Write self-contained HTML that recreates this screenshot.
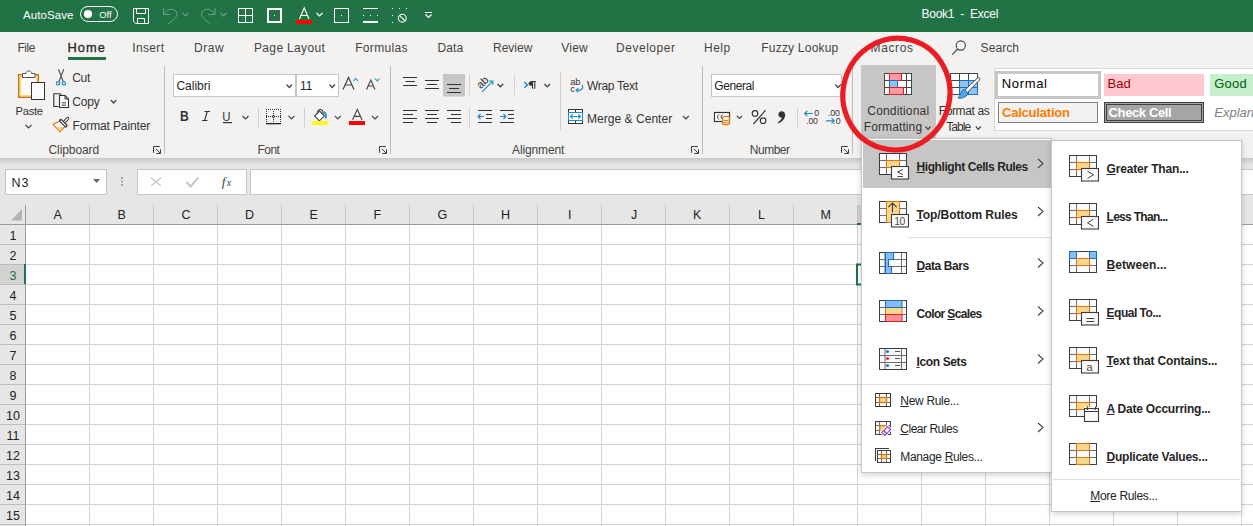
<!DOCTYPE html>
<html><head><meta charset="utf-8"><style>
html,body{margin:0;padding:0;}
body{width:1253px;height:526px;overflow:hidden;position:relative;background:#fff;font-family:"Liberation Sans",sans-serif;}
.a{position:absolute;}
.t{position:absolute;white-space:pre;line-height:20px;height:20px;font-family:"Liberation Sans",sans-serif;}
.t u{text-decoration:underline;text-underline-offset:1px;text-decoration-thickness:1px;}
svg{position:absolute;left:0;top:0;}
</style></head><body>
<!-- backgrounds -->
<div class="a" style="left:0;top:0;width:1253px;height:32px;background:#217346"></div>
<div class="a" style="left:0;top:32px;width:1253px;height:126px;background:#f3f2f1"></div>
<div class="a" style="left:0;top:158px;width:1253px;height:67px;background:#e6e6e6"></div>
<div class="a" style="left:0;top:158px;width:1253px;height:7px;background:linear-gradient(#c9c9c9,#e6e6e6)"></div>
<!-- formula bar boxes -->
<div class="a" style="left:5px;top:169px;width:100px;height:24px;background:#fff;border:1px solid #c6c6c6"></div>
<div class="a" style="left:137px;top:169px;width:108px;height:24px;background:#fff;border:1px solid #c6c6c6"></div>
<div class="a" style="left:250px;top:169px;width:1010px;height:24px;background:#fff;border:1px solid #c6c6c6"></div>
<!-- row header -->
<div class="a" style="left:0;top:225px;width:25px;height:301px;background:#e6e6e6"></div>
<div class="a" style="left:0;top:265px;width:25px;height:19px;background:#d2d2d2"></div>
<div class="a" style="left:857px;top:205px;width:64px;height:19px;background:#d2d2d2"></div>
<!-- ribbon styles gallery -->
<div class="a" style="left:994px;top:68px;width:300px;height:61px;background:#fff;border:1px solid #d6d6d6"></div>
<div class="a" style="left:995px;top:71px;width:100px;height:22px;background:#fff;border:3px solid #c6c6c6"></div>
<div class="a" style="left:1104px;top:74px;width:100px;height:22px;background:#ffc7ce"></div>
<div class="a" style="left:1210px;top:74px;width:100px;height:22px;background:#c6efce"></div>
<div class="a" style="left:998px;top:102px;width:98px;height:19px;background:#f2f2f2;border:1px solid #7f7f7f"></div>
<div class="a" style="left:1104px;top:102px;width:94px;height:15px;background:#a5a5a5;border:3px double #3f3f3f"></div>
<!-- CF button highlight -->
<div class="a" style="left:861px;top:65px;width:75px;height:73px;background:#c8c6c4"></div>
<svg width="1253" height="526" viewBox="0 0 1253 526">
<line x1="25.5" y1="205" x2="25.5" y2="224" stroke="#c6c6c6"/>
<line x1="89.5" y1="205" x2="89.5" y2="224" stroke="#c6c6c6"/>
<line x1="153.5" y1="205" x2="153.5" y2="224" stroke="#c6c6c6"/>
<line x1="217.5" y1="205" x2="217.5" y2="224" stroke="#c6c6c6"/>
<line x1="281.5" y1="205" x2="281.5" y2="224" stroke="#c6c6c6"/>
<line x1="345.5" y1="205" x2="345.5" y2="224" stroke="#c6c6c6"/>
<line x1="409.5" y1="205" x2="409.5" y2="224" stroke="#c6c6c6"/>
<line x1="473.5" y1="205" x2="473.5" y2="224" stroke="#c6c6c6"/>
<line x1="537.5" y1="205" x2="537.5" y2="224" stroke="#c6c6c6"/>
<line x1="601.5" y1="205" x2="601.5" y2="224" stroke="#c6c6c6"/>
<line x1="665.5" y1="205" x2="665.5" y2="224" stroke="#c6c6c6"/>
<line x1="729.5" y1="205" x2="729.5" y2="224" stroke="#c6c6c6"/>
<line x1="793.5" y1="205" x2="793.5" y2="224" stroke="#c6c6c6"/>
<line x1="857.5" y1="205" x2="857.5" y2="224" stroke="#c6c6c6"/>
<line x1="921.5" y1="205" x2="921.5" y2="224" stroke="#c6c6c6"/>
<line x1="985.5" y1="205" x2="985.5" y2="224" stroke="#c6c6c6"/>
<line x1="1049.5" y1="205" x2="1049.5" y2="224" stroke="#c6c6c6"/>
<line x1="1113.5" y1="205" x2="1113.5" y2="224" stroke="#c6c6c6"/>
<line x1="1177.5" y1="205" x2="1177.5" y2="224" stroke="#c6c6c6"/>
<line x1="1241.5" y1="205" x2="1241.5" y2="224" stroke="#c6c6c6"/>
<line x1="89.5" y1="225" x2="89.5" y2="526" stroke="#d4d4d4"/>
<line x1="153.5" y1="225" x2="153.5" y2="526" stroke="#d4d4d4"/>
<line x1="217.5" y1="225" x2="217.5" y2="526" stroke="#d4d4d4"/>
<line x1="281.5" y1="225" x2="281.5" y2="526" stroke="#d4d4d4"/>
<line x1="345.5" y1="225" x2="345.5" y2="526" stroke="#d4d4d4"/>
<line x1="409.5" y1="225" x2="409.5" y2="526" stroke="#d4d4d4"/>
<line x1="473.5" y1="225" x2="473.5" y2="526" stroke="#d4d4d4"/>
<line x1="537.5" y1="225" x2="537.5" y2="526" stroke="#d4d4d4"/>
<line x1="601.5" y1="225" x2="601.5" y2="526" stroke="#d4d4d4"/>
<line x1="665.5" y1="225" x2="665.5" y2="526" stroke="#d4d4d4"/>
<line x1="729.5" y1="225" x2="729.5" y2="526" stroke="#d4d4d4"/>
<line x1="793.5" y1="225" x2="793.5" y2="526" stroke="#d4d4d4"/>
<line x1="857.5" y1="225" x2="857.5" y2="526" stroke="#d4d4d4"/>
<line x1="921.5" y1="225" x2="921.5" y2="526" stroke="#d4d4d4"/>
<line x1="985.5" y1="225" x2="985.5" y2="526" stroke="#d4d4d4"/>
<line x1="1049.5" y1="225" x2="1049.5" y2="526" stroke="#d4d4d4"/>
<line x1="1113.5" y1="225" x2="1113.5" y2="526" stroke="#d4d4d4"/>
<line x1="1177.5" y1="225" x2="1177.5" y2="526" stroke="#d4d4d4"/>
<line x1="1241.5" y1="225" x2="1241.5" y2="526" stroke="#d4d4d4"/>
<line x1="26" y1="244.5" x2="1253" y2="244.5" stroke="#d4d4d4"/>
<line x1="0" y1="244.5" x2="25" y2="244.5" stroke="#bdbdbd"/>
<line x1="26" y1="264.5" x2="1253" y2="264.5" stroke="#d4d4d4"/>
<line x1="0" y1="264.5" x2="25" y2="264.5" stroke="#bdbdbd"/>
<line x1="26" y1="284.5" x2="1253" y2="284.5" stroke="#d4d4d4"/>
<line x1="0" y1="284.5" x2="25" y2="284.5" stroke="#bdbdbd"/>
<line x1="26" y1="304.5" x2="1253" y2="304.5" stroke="#d4d4d4"/>
<line x1="0" y1="304.5" x2="25" y2="304.5" stroke="#bdbdbd"/>
<line x1="26" y1="324.5" x2="1253" y2="324.5" stroke="#d4d4d4"/>
<line x1="0" y1="324.5" x2="25" y2="324.5" stroke="#bdbdbd"/>
<line x1="26" y1="344.5" x2="1253" y2="344.5" stroke="#d4d4d4"/>
<line x1="0" y1="344.5" x2="25" y2="344.5" stroke="#bdbdbd"/>
<line x1="26" y1="364.5" x2="1253" y2="364.5" stroke="#d4d4d4"/>
<line x1="0" y1="364.5" x2="25" y2="364.5" stroke="#bdbdbd"/>
<line x1="26" y1="384.5" x2="1253" y2="384.5" stroke="#d4d4d4"/>
<line x1="0" y1="384.5" x2="25" y2="384.5" stroke="#bdbdbd"/>
<line x1="26" y1="404.5" x2="1253" y2="404.5" stroke="#d4d4d4"/>
<line x1="0" y1="404.5" x2="25" y2="404.5" stroke="#bdbdbd"/>
<line x1="26" y1="424.5" x2="1253" y2="424.5" stroke="#d4d4d4"/>
<line x1="0" y1="424.5" x2="25" y2="424.5" stroke="#bdbdbd"/>
<line x1="26" y1="444.5" x2="1253" y2="444.5" stroke="#d4d4d4"/>
<line x1="0" y1="444.5" x2="25" y2="444.5" stroke="#bdbdbd"/>
<line x1="26" y1="464.5" x2="1253" y2="464.5" stroke="#d4d4d4"/>
<line x1="0" y1="464.5" x2="25" y2="464.5" stroke="#bdbdbd"/>
<line x1="26" y1="484.5" x2="1253" y2="484.5" stroke="#d4d4d4"/>
<line x1="0" y1="484.5" x2="25" y2="484.5" stroke="#bdbdbd"/>
<line x1="26" y1="504.5" x2="1253" y2="504.5" stroke="#d4d4d4"/>
<line x1="0" y1="504.5" x2="25" y2="504.5" stroke="#bdbdbd"/>
<line x1="26" y1="524.5" x2="1253" y2="524.5" stroke="#d4d4d4"/>
<line x1="0" y1="524.5" x2="25" y2="524.5" stroke="#bdbdbd"/>
<!-- header borders -->
<line x1="0" y1="224.5" x2="1253" y2="224.5" stroke="#9b9b9b"/>
<line x1="25.5" y1="205" x2="25.5" y2="526" stroke="#9b9b9b"/>
<polygon points="11,220.5 22,220.5 22,209" fill="#b4b4b4"/>
<line x1="857" y1="224" x2="921" y2="224" stroke="#217346" stroke-width="2"/>
<line x1="25" y1="264" x2="25" y2="284" stroke="#217346" stroke-width="2"/>
<rect x="857" y="264.5" width="64" height="20" fill="none" stroke="#217346" stroke-width="2"/>
<path d="M133.5,8.5 H148.5 V23.5 H135.5 L133.5,21.5 Z" fill="none" stroke="#ffffff"/>
<path d="M136.5,8.5 V13.5 H145.5 V8.5" fill="none" stroke="#ffffff"/>
<path d="M137.5,23.5 V18.5 H144.5 V23.5" fill="none" stroke="#ffffff"/>
<path d="M163.5,8 V14.5 H170" fill="none" stroke="#6a9f80"/>
<path d="M164,14 C167,7.5 177,8 177,14 C177,17 174,19.5 168,24" fill="none" stroke="#6a9f80"/>
<polyline points="182.5,13 185.5,16 188.5,13" fill="none" stroke="#6a9f80" stroke-width="1.2"/>
<path d="M215,8 V14.5 H208" fill="none" stroke="#6a9f80"/>
<path d="M214.5,14 C211.5,7.5 201.5,8 201.5,14 C201.5,17 204.5,19.5 210.5,24" fill="none" stroke="#6a9f80"/>
<polyline points="220.5,13 223.5,16 226.5,13" fill="none" stroke="#6a9f80" stroke-width="1.2"/>
<rect x="238.5" y="8.5" width="14" height="14" fill="none" stroke="#ffffff"/>
<line x1="245.5" y1="8.5" x2="245.5" y2="22.5" stroke="#ffffff"/><line x1="238.5" y1="15.5" x2="252.5" y2="15.5" stroke="#ffffff"/>
<rect x="268" y="9" width="13" height="13" fill="none" stroke="#ffffff" stroke-width="2"/><rect x="274" y="15" width="1" height="1" fill="#ffffff"/>
<path d="M299.5,19 L304.2,8 L309,19 M301.2,15.5 H307.2" fill="none" stroke="#ffffff" stroke-width="1.1"/>
<rect x="296" y="20" width="16" height="4" fill="#ff0000"/>
<polyline points="316.5,13 319.5,16 322.5,13" fill="none" stroke="#ffffff" stroke-width="1.2"/>
<rect x="334.5" y="8.5" width="14" height="14" fill="none" stroke="#ffffff"/><rect x="341" y="15" width="1" height="1" fill="#ffffff"/>
<line x1="363" y1="8.5" x2="378" y2="8.5" stroke="#ffffff"/><rect x="363" y="21" width="15" height="2" fill="#ffffff"/>
<rect x="363" y="15" width="1" height="1" fill="#ffffff"/>
<rect x="370" y="15" width="1" height="1" fill="#ffffff"/>
<rect x="377" y="15" width="1" height="1" fill="#ffffff"/>
<rect x="392" y="8" width="1" height="1" fill="#ffffff"/>
<rect x="399" y="8" width="1" height="1" fill="#ffffff"/>
<rect x="406" y="8" width="1" height="1" fill="#ffffff"/>
<rect x="392" y="15" width="1" height="1" fill="#ffffff"/>
<rect x="392" y="22" width="1" height="1" fill="#ffffff"/>
<circle cx="402.3" cy="18.2" r="3.9" fill="none" stroke="#ffffff" stroke-width="1.1"/><line x1="399.5" y1="15.4" x2="405.1" y2="21" stroke="#ffffff" stroke-width="1.1"/>
<line x1="425" y1="12.5" x2="432" y2="12.5" stroke="#ffffff"/><polyline points="425.5,14.5 428.5,17.5 431.5,14.5" fill="none" stroke="#ffffff" stroke-width="1.2"/>
<rect x="80.5" y="6.5" width="37" height="15" rx="7.5" fill="none" stroke="#ffffff"/><circle cx="88" cy="14.1" r="4.1" fill="#ffffff"/>
<rect x="68" y="57" width="38" height="3" fill="#217346"/>
<circle cx="960.8" cy="45.5" r="4.6" fill="none" stroke="#444444" stroke-width="1.1"/><line x1="957.6" y1="49" x2="952.2" y2="54.6" stroke="#444444" stroke-width="1.1"/>
<line x1="164.5" y1="66" x2="164.5" y2="154" stroke="#bdbbb9"/>
<line x1="390.5" y1="66" x2="390.5" y2="154" stroke="#bdbbb9"/>
<line x1="702.5" y1="66" x2="702.5" y2="154" stroke="#bdbbb9"/>
<line x1="852.5" y1="66" x2="852.5" y2="154" stroke="#bdbbb9"/>
<path d="M153.5,152.8 V146.5 H159.8" fill="none" stroke="#3a3a3a"/><path d="M155.8,148.8 L160,153" fill="none" stroke="#3a3a3a"/><path d="M156.3,153.5 H160.5 V149.3" fill="none" stroke="#3a3a3a"/>
<path d="M379.5,152.8 V146.5 H385.8" fill="none" stroke="#3a3a3a"/><path d="M381.8,148.8 L386,153" fill="none" stroke="#3a3a3a"/><path d="M382.3,153.5 H386.5 V149.3" fill="none" stroke="#3a3a3a"/>
<path d="M691.5,152.8 V146.5 H697.8" fill="none" stroke="#3a3a3a"/><path d="M693.8,148.8 L698,153" fill="none" stroke="#3a3a3a"/><path d="M694.3,153.5 H698.5 V149.3" fill="none" stroke="#3a3a3a"/>
<path d="M841.5,152.8 V146.5 H847.8" fill="none" stroke="#3a3a3a"/><path d="M843.8,148.8 L848,153" fill="none" stroke="#3a3a3a"/><path d="M844.3,153.5 H848.5 V149.3" fill="none" stroke="#3a3a3a"/>
<rect x="18.75" y="74.75" width="19.5" height="22.5" fill="#fffdf8" stroke="#d47500" stroke-width="1.5"/>
<rect x="20.5" y="76.5" width="16" height="19" fill="none" stroke="#f8d48c" stroke-width="1"/>
<path d="M22.5,77.5 V73.5 H26 C26.5,70 31,70 31.5,73.5 H35 V77.5 Z" fill="#ffffff" stroke="#555"/>
<rect x="31.5" y="82.5" width="13" height="17" fill="#fbfbfb" stroke="#333"/>
<polyline points="25.5,125 28.5,128 31.5,125" fill="none" stroke="#444444" stroke-width="1.2"/>
<path d="M58.4,69.3 L63.2,81.5 M63.8,69.3 L59,81.5" fill="none" stroke="#505050" stroke-width="1.1"/>
<circle cx="58.1" cy="83.2" r="1.65" fill="#fff" stroke="#1e8bcd" stroke-width="1.3"/><circle cx="63.9" cy="83.2" r="1.65" fill="#fff" stroke="#1e8bcd" stroke-width="1.3"/>
<path d="M58.5,106.5 H53.8 V93.8 H60 L61.5,95.3" fill="none" stroke="#333" stroke-width="1.1"/>
<path d="M59.5,107.5 V95.5 H65 L68.5,99 V107.5 Z" fill="#fff" stroke="#333" stroke-width="1.1"/><path d="M65,95.5 V99 H68.5" fill="none" stroke="#333"/>
<line x1="61.7" y1="102.8" x2="66" y2="102.8" stroke="#333"/><line x1="61.7" y1="105.2" x2="66" y2="105.2" stroke="#333"/>
<polyline points="110.8,100 113.55,103 116.3,100" fill="none" stroke="#444444" stroke-width="1.2"/>
<path d="M53.2,124.3 L60.8,120.8 L65.5,126 L59.8,131.6 Z" fill="#fff" stroke="#e8730c" stroke-width="1.2"/>
<path d="M56.5,127.3 L63.5,127 L59.8,131 Z" fill="#fbd38a"/>
<path d="M63.5,123.2 L67.6,118.5" stroke="#3a3a3a" stroke-width="3.4" stroke-linecap="round"/><path d="M63.5,123.2 L67.6,118.5" stroke="#fff" stroke-width="1.2" stroke-linecap="round"/>
<path d="M60.8,120.6 L65.8,125.8" stroke="#3a3a3a" stroke-width="3.4" stroke-linecap="round"/><path d="M60.8,120.6 L65.8,125.8" stroke="#fff" stroke-width="1.2"/>
<rect x="173.5" y="74.5" width="122" height="22" fill="#fff" stroke="#c6c6c6"/>
<rect x="296.5" y="74.5" width="42" height="22" fill="#fff" stroke="#c6c6c6"/>
<polyline points="286.5,84.5 289.25,87.5 292.0,84.5" fill="none" stroke="#444444" stroke-width="1.2"/><polyline points="329.5,84.5 332.25,87.5 335.0,84.5" fill="none" stroke="#444444" stroke-width="1.2"/>
<path d="M343,89.5 L348.5,77.5 L354,89.5 M345,85 H352" fill="none" stroke="#444" stroke-width="1.2"/>
<polyline points="353.5,81 355.8,78.5 358,81" fill="none" stroke="#1e8bcd" stroke-width="1.1"/>
<path d="M366.5,89.5 L370.8,80 L375,89.5 M368,86 H373.5" fill="none" stroke="#444" stroke-width="1.1"/>
<polyline points="375,78.5 377.3,81 379.5,78.5" fill="none" stroke="#1e8bcd" stroke-width="1.1"/>
<text x="180" y="120.9" font-family="Liberation Sans" font-weight="bold" font-size="13.8" fill="#333" transform="translate(180 0) scale(0.88 1) translate(-180 0)">B</text>
<path d="M204.5,111.5 H210 M202,120.5 H207.5 M207.2,111.5 L204.7,120.5" fill="none" stroke="#333" stroke-width="1.1"/>
<text x="222.3" y="120.6" font-family="Liberation Sans" font-size="13.3" fill="#333" transform="translate(222.3 0) scale(0.86 1) translate(-222.3 0)">U</text><rect x="223" y="122" width="9" height="1.2" fill="#333"/>
<polyline points="242.5,116 245.5,119 248.5,116" fill="none" stroke="#444444" stroke-width="1.2"/>
<line x1="258.5" y1="108" x2="258.5" y2="127.5" stroke="#d2d0ce"/><line x1="304.5" y1="108" x2="304.5" y2="127.5" stroke="#d2d0ce"/>
<rect x="266" y="109" width="1" height="1" fill="#333"/><rect x="266" y="116" width="1" height="1" fill="#333"/><rect x="268" y="109" width="1" height="1" fill="#333"/><rect x="268" y="116" width="1" height="1" fill="#333"/><rect x="270" y="109" width="1" height="1" fill="#333"/><rect x="270" y="116" width="1" height="1" fill="#333"/><rect x="272" y="109" width="1" height="1" fill="#333"/><rect x="272" y="116" width="1" height="1" fill="#333"/><rect x="274" y="109" width="1" height="1" fill="#333"/><rect x="274" y="116" width="1" height="1" fill="#333"/><rect x="276" y="109" width="1" height="1" fill="#333"/><rect x="276" y="116" width="1" height="1" fill="#333"/><rect x="278" y="109" width="1" height="1" fill="#333"/><rect x="278" y="116" width="1" height="1" fill="#333"/><rect x="280" y="109" width="1" height="1" fill="#333"/><rect x="280" y="116" width="1" height="1" fill="#333"/><rect x="266" y="111" width="1" height="1" fill="#333"/><rect x="273" y="111" width="1" height="1" fill="#333"/><rect x="280" y="111" width="1" height="1" fill="#333"/><rect x="266" y="113" width="1" height="1" fill="#333"/><rect x="273" y="113" width="1" height="1" fill="#333"/><rect x="280" y="113" width="1" height="1" fill="#333"/><rect x="266" y="115" width="1" height="1" fill="#333"/><rect x="273" y="115" width="1" height="1" fill="#333"/><rect x="280" y="115" width="1" height="1" fill="#333"/><rect x="266" y="117" width="1" height="1" fill="#333"/><rect x="273" y="117" width="1" height="1" fill="#333"/><rect x="280" y="117" width="1" height="1" fill="#333"/><rect x="266" y="119" width="1" height="1" fill="#333"/><rect x="273" y="119" width="1" height="1" fill="#333"/><rect x="280" y="119" width="1" height="1" fill="#333"/><rect x="266" y="121" width="1" height="1" fill="#333"/><rect x="273" y="121" width="1" height="1" fill="#333"/><rect x="280" y="121" width="1" height="1" fill="#333"/>
<circle cx="273.5" cy="116.5" r="1.2" fill="none" stroke="#333" stroke-width="0.8"/>
<rect x="266" y="123" width="15" height="1.3" fill="#222"/>
<polyline points="288.5,115.8 291.5,118.8 294.5,115.8" fill="none" stroke="#444444" stroke-width="1.2"/>
<path d="M314.6,116 L319.6,111 L324.4,115.8 L319.4,120.8 Z" fill="#fff" stroke="#444" stroke-width="1.15"/>
<path d="M317.2,113.4 C317.5,109.5 321.5,107.8 322.8,111.5 L323.2,114.5" fill="none" stroke="#444" stroke-width="1.1"/>
<path d="M323.6,111.8 C325.8,112.5 326.3,115.5 325.6,118.6" fill="none" stroke="#1e8bcd" stroke-width="1.6"/>
<rect x="312" y="121" width="16" height="4" fill="#ffff00"/>
<polyline points="334.8,115.8 337.8,118.8 340.8,115.8" fill="none" stroke="#444444" stroke-width="1.2"/>
<path d="M352.6,119.8 L357.3,109.3 L362,119.8 M354.1,116.3 H360.5" fill="none" stroke="#444" stroke-width="1.15"/>
<rect x="349" y="121" width="16" height="4" fill="#ff0000"/>
<polyline points="372,116 375.0,119 378,116" fill="none" stroke="#444444" stroke-width="1.2"/>
<rect x="443" y="74" width="22" height="22.5" fill="#c8c6c4"/>
<line x1="403" y1="77.5" x2="417" y2="77.5" stroke="#333"/><line x1="405.5" y1="81.5" x2="415" y2="81.5" stroke="#333"/><line x1="403" y1="85.5" x2="417" y2="85.5" stroke="#333"/>
<line x1="425" y1="80.5" x2="439" y2="80.5" stroke="#333"/><line x1="427" y1="84.5" x2="437" y2="84.5" stroke="#333"/><line x1="425" y1="88.5" x2="439" y2="88.5" stroke="#333"/>
<line x1="447" y1="84.5" x2="461" y2="84.5" stroke="#333"/><line x1="449" y1="88.5" x2="459" y2="88.5" stroke="#333"/><line x1="447" y1="92.5" x2="461" y2="92.5" stroke="#333"/>
<line x1="403" y1="110.5" x2="417" y2="110.5" stroke="#333"/><line x1="403" y1="114.5" x2="413" y2="114.5" stroke="#333"/><line x1="403" y1="118.5" x2="417" y2="118.5" stroke="#333"/><line x1="403" y1="122.5" x2="413" y2="122.5" stroke="#333"/>
<line x1="425" y1="110.5" x2="439" y2="110.5" stroke="#333"/><line x1="427" y1="114.5" x2="437" y2="114.5" stroke="#333"/><line x1="425" y1="118.5" x2="439" y2="118.5" stroke="#333"/><line x1="427" y1="122.5" x2="437" y2="122.5" stroke="#333"/>
<line x1="447" y1="110.5" x2="461" y2="110.5" stroke="#333"/><line x1="451" y1="114.5" x2="461" y2="114.5" stroke="#333"/><line x1="447" y1="118.5" x2="461" y2="118.5" stroke="#333"/><line x1="451" y1="122.5" x2="461" y2="122.5" stroke="#333"/>
<line x1="469.5" y1="75" x2="469.5" y2="95" stroke="#d2d0ce"/><line x1="514.5" y1="75" x2="514.5" y2="95" stroke="#d2d0ce"/><line x1="469.5" y1="107.5" x2="469.5" y2="128" stroke="#d2d0ce"/>
<line x1="560.5" y1="72" x2="560.5" y2="131" stroke="#d2d0ce"/>
<text x="482.5" y="86" text-anchor="middle" font-family="Liberation Sans" font-size="11" fill="#333" transform="rotate(-45 482.5 82.4)">ab</text>
<path d="M482,91.8 L492.5,81.3 M489,81 H492.8 V84.8" fill="none" stroke="#1e8bcd" stroke-width="1.2"/>
<polyline points="497.5,84 500.35,86.8 503.2,84" fill="none" stroke="#444444" stroke-width="1.3"/>
<polyline points="524.3,82 527.5,84.9 524.3,87.8" fill="none" stroke="#1e8bcd" stroke-width="1.4"/>
<path d="M531.5,81.5 H535.8 M532.5,81.5 V88.8 M534.8,81.5 V88.8" fill="none" stroke="#333" stroke-width="1.1"/><path d="M532.8,81 C529.5,81 528.6,82.5 528.6,83.5 C528.6,84.8 529.8,86 532.8,86 Z" fill="#333"/>
<polyline points="544.5,84 547.3,86.8 550.1,84" fill="none" stroke="#444444" stroke-width="1.3"/>
<line x1="478" y1="110.5" x2="492" y2="110.5" stroke="#333"/><line x1="486" y1="114.5" x2="492" y2="114.5" stroke="#333"/><line x1="486" y1="118.5" x2="492" y2="118.5" stroke="#333"/><line x1="478" y1="122.5" x2="492" y2="122.5" stroke="#333"/>
<path d="M484,116.5 H478 M480.5,114 L478,116.5 L480.5,119" fill="none" stroke="#1e8bcd" stroke-width="1.2"/>
<line x1="500" y1="110.5" x2="514" y2="110.5" stroke="#333"/><line x1="508" y1="114.5" x2="514" y2="114.5" stroke="#333"/><line x1="508" y1="118.5" x2="514" y2="118.5" stroke="#333"/><line x1="500" y1="122.5" x2="514" y2="122.5" stroke="#333"/>
<path d="M500,116.5 H506 M503.5,114 L506,116.5 L503.5,119" fill="none" stroke="#1e8bcd" stroke-width="1.2"/>
<text x="570.3" y="85" font-family="Liberation Sans" font-size="9.3" fill="#333" letter-spacing="-0.3">ab</text><text x="570.3" y="91.6" font-family="Liberation Sans" font-size="9.3" fill="#333">c</text>
<path d="M582.3,85 C583.5,87.5 582,90.3 579,90.3 H576.2 M578.3,88.2 L576.2,90.3 L578.3,92.4" fill="none" stroke="#1e8bcd" stroke-width="1.2"/>
<rect x="568.5" y="109.5" width="14" height="14" fill="#fff" stroke="#333"/><line x1="575.5" y1="109.5" x2="575.5" y2="123.5" stroke="#333"/>
<rect x="568.5" y="112.5" width="14" height="8" fill="#fff" stroke="#1e8bcd"/>
<path d="M570.5,116.5 H580.5 M572.7,114.3 L570.5,116.5 L572.7,118.7 M578.3,114.3 L580.5,116.5 L578.3,118.7" fill="none" stroke="#1e8bcd" stroke-width="1.2"/>
<polyline points="683,116 685.9,119 688.8,116" fill="none" stroke="#444444" stroke-width="1.2"/>
<rect x="711.5" y="74.5" width="130" height="22" fill="#fff" stroke="#c6c6c6"/>
<polyline points="835.3,84.5 838.05,87.5 840.8,84.5" fill="none" stroke="#444444" stroke-width="1.2"/>
<rect x="714.5" y="112.5" width="15" height="9" fill="#fff" stroke="#333" stroke-width="1.2"/>
<path d="M719.2,114.8 C717,114.8 717,119.2 719.2,119.2 M722.8,114.8 C720.6,114.8 720.6,119.2 722.8,119.2" fill="none" stroke="#333" stroke-width="1"/>
<path d="M722.5,117.8 C722.5,115.8 729.5,115.8 729.5,117.8 V123.2 C729.5,125.2 722.5,125.2 722.5,123.2 Z" fill="#fff" stroke="#e8730c" stroke-width="1.2"/>
<path d="M722.5,119.5 C723.5,121 728.5,121 729.5,119.5 M722.5,121.8 C723.5,123.3 728.5,123.3 729.5,121.8" fill="none" stroke="#e8730c" stroke-width="1"/>
<polyline points="736.8,115.8 739.4,118.5 742.0,115.8" fill="none" stroke="#444444" stroke-width="1.2"/>
<circle cx="755" cy="113.4" r="2.8" fill="none" stroke="#333" stroke-width="1.15"/><circle cx="763.1" cy="120.7" r="2.8" fill="none" stroke="#333" stroke-width="1.15"/><line x1="765.6" y1="110.2" x2="753.4" y2="124" stroke="#333" stroke-width="1.15"/>
<path d="M781.6,111.2 C783.8,111.2 785.2,112.8 785.2,115 C785.2,118.5 782.2,122 778.2,123.3 L777.6,122.4 C780,121 781.5,119.5 782,117.6 C780,117.8 778.4,116.5 778.4,114.5 C778.4,112.5 779.8,111.2 781.6,111.2 Z" fill="#333"/>
<line x1="797.5" y1="108" x2="797.5" y2="127.5" stroke="#d2d0ce"/>
<path d="M804.6,113.5 H812.8 M807.3,110.8 L804.6,113.5 L807.3,116.2" fill="none" stroke="#1e8bcd" stroke-width="1.2"/>
<text x="814.2" y="115.8" font-family="Liberation Sans" font-size="8.8" fill="#333">0</text><text x="806.2" y="124" font-family="Liberation Sans" font-size="8.8" fill="#333" letter-spacing="-0.2">.00</text>
<text x="828" y="115.8" font-family="Liberation Sans" font-size="8.8" fill="#333" letter-spacing="-0.2">.00</text><text x="833.3" y="124" font-family="Liberation Sans" font-size="8.8" fill="#333">.0</text>
<path d="M826,120.8 H834.2 M831.5,118.1 L834.2,120.8 L831.5,123.5" fill="none" stroke="#1e8bcd" stroke-width="1.2"/>
<rect x="884.5" y="73.5" width="27" height="21" fill="#fff" stroke="#444"/>
<line x1="884.5" y1="80.5" x2="911.5" y2="80.5" stroke="#444"/><line x1="884.5" y1="87.5" x2="911.5" y2="87.5" stroke="#444"/>
<line x1="889.5" y1="73.5" x2="889.5" y2="94.5" stroke="#444"/><line x1="906.5" y1="73.5" x2="906.5" y2="94.5" stroke="#444"/>
<rect x="889.5" y="73.5" width="12" height="7" fill="#ff9aa2" stroke="#e02020"/>
<rect x="889.5" y="80.5" width="8" height="7" fill="#8ec4ef" stroke="#1a6fc0"/>
<rect x="889.5" y="87.5" width="14" height="7" fill="#ff9aa2" stroke="#e02020"/>
<rect x="950.5" y="73.5" width="27" height="21" fill="#fff"/><rect x="959.5" y="80.5" width="18" height="14" fill="#8ec4ef"/>
<rect x="950.5" y="73.5" width="27" height="21" fill="none" stroke="#444"/>
<line x1="950.5" y1="80.5" x2="959.5" y2="80.5" stroke="#444"/><line x1="950.5" y1="87.5" x2="959.5" y2="87.5" stroke="#444"/>
<line x1="959.5" y1="73.5" x2="959.5" y2="80.5" stroke="#444"/><line x1="968.5" y1="73.5" x2="968.5" y2="80.5" stroke="#444"/>
<path d="M959.5,80.5 H977.5 V94.5 H959.5 Z M968.5,80.5 V94.5 M959.5,87.5 H977.5" fill="none" stroke="#1a6fc0"/>
<path d="M965,90 L977,78.5 C979,76.5 981,78.5 979,80.5 L967.5,92.5 Z" fill="#fff" stroke="#444"/>
<path d="M964.5,89.5 C961,90 961,95 958,98 C963,99 968,96 967.5,92.5 Z" fill="#5ba3e0" stroke="#1a6fc0"/>
<polygon points="93,179 100.2,179 96.6,183" fill="#666"/>
<rect x="121" y="177" width="2" height="2" fill="#a6a6a6"/><rect x="121" y="180.5" width="2" height="2" fill="#a6a6a6"/><rect x="121" y="184" width="2" height="2" fill="#a6a6a6"/>
<path d="M151,177.8 L161,186 M161,177.8 L151,186" stroke="#c6c6c6" stroke-width="1.4"/>
<path d="M186.5,182 L190.5,186.5 L198.5,177.5" fill="none" stroke="#cbcbcb" stroke-width="2.2"/>
<text x="221.8" y="186" font-family="Liberation Serif" font-style="italic" font-size="13.5" fill="#444">f</text><text x="226.8" y="186" font-family="Liberation Serif" font-style="italic" font-size="10" fill="#444">x</text>
<polyline points="925.5,126.5 928.0,129.3 930.5,126.5" fill="none" stroke="#444444" stroke-width="1.2"/>
<polyline points="975.8,126.5 978.3,129.3 980.8,126.5" fill="none" stroke="#444444" stroke-width="1.2"/>
</svg>
<div class="t" style="left:23.00px;top:5.20px;font-size:11.5px;color:#ffffff;font-weight:normal;font-style:normal;letter-spacing:0.075px;">AutoSave</div>
<div class="t" style="left:99.20px;top:5.10px;font-size:9.4px;color:#ffffff;font-weight:normal;font-style:normal;letter-spacing:0.036px;">Off</div>
<div class="t" style="left:921.50px;top:4.00px;font-size:12px;color:#ffffff;font-weight:normal;font-style:normal;letter-spacing:-0.274px;">Book1  -  Excel</div>
<div class="t" style="left:17.40px;top:38.30px;font-size:12px;color:#444444;font-weight:normal;font-style:normal;letter-spacing:-0.454px;">File</div>
<div class="t" style="left:67.40px;top:37.80px;font-size:12.8px;color:#262626;font-weight:normal;font-style:normal;letter-spacing:1.094px;-webkit-text-stroke:0.3px #262626;">Home</div>
<div class="t" style="left:132.30px;top:38.30px;font-size:12px;color:#444444;font-weight:normal;font-style:normal;letter-spacing:0.344px;">Insert</div>
<div class="t" style="left:194.00px;top:38.30px;font-size:12px;color:#444444;font-weight:normal;font-style:normal;letter-spacing:0.555px;">Draw</div>
<div class="t" style="left:254.00px;top:38.30px;font-size:12px;color:#444444;font-weight:normal;font-style:normal;letter-spacing:0.345px;">Page Layout</div>
<div class="t" style="left:355.20px;top:38.30px;font-size:12px;color:#444444;font-weight:normal;font-style:normal;letter-spacing:0.341px;">Formulas</div>
<div class="t" style="left:437.50px;top:38.30px;font-size:12px;color:#444444;font-weight:normal;font-style:normal;letter-spacing:0.109px;">Data</div>
<div class="t" style="left:493.00px;top:38.30px;font-size:12px;color:#444444;font-weight:normal;font-style:normal;letter-spacing:0.004px;">Review</div>
<div class="t" style="left:561.30px;top:38.30px;font-size:12px;color:#444444;font-weight:normal;font-style:normal;letter-spacing:0.191px;">View</div>
<div class="t" style="left:616.00px;top:38.30px;font-size:12px;color:#444444;font-weight:normal;font-style:normal;letter-spacing:0.537px;">Developer</div>
<div class="t" style="left:704.00px;top:38.30px;font-size:12px;color:#444444;font-weight:normal;font-style:normal;letter-spacing:0.465px;">Help</div>
<div class="t" style="left:761.30px;top:38.30px;font-size:12px;color:#444444;font-weight:normal;font-style:normal;letter-spacing:0.206px;">Fuzzy Lookup</div>
<div class="t" style="left:870.50px;top:38.30px;font-size:12px;color:#444444;font-weight:normal;font-style:normal;letter-spacing:0.632px;">Macros</div>
<div class="t" style="left:980.60px;top:38.30px;font-size:12px;color:#444444;font-weight:normal;font-style:normal;letter-spacing:0.070px;">Search</div>
<div class="t" style="left:15.60px;top:101.20px;font-size:11.2px;color:#333333;font-weight:normal;font-style:normal;letter-spacing:-0.296px;">Paste</div>
<div class="t" style="left:72.20px;top:68.00px;font-size:12px;color:#333333;font-weight:normal;font-style:normal;letter-spacing:-0.320px;">Cut</div>
<div class="t" style="left:72.20px;top:92.00px;font-size:12px;color:#333333;font-weight:normal;font-style:normal;letter-spacing:-0.138px;">Copy</div>
<div class="t" style="left:72.60px;top:116.00px;font-size:12px;color:#333333;font-weight:normal;font-style:normal;letter-spacing:-0.136px;">Format Painter</div>
<div class="t" style="left:48.50px;top:140.20px;font-size:12px;color:#444444;font-weight:normal;font-style:normal;letter-spacing:-0.086px;">Clipboard</div>
<div class="t" style="left:176.40px;top:76.00px;font-size:12px;color:#262626;font-weight:normal;font-style:normal;letter-spacing:-0.007px;">Calibri</div>
<div class="t" style="left:300.00px;top:76.00px;font-size:12px;color:#262626;font-weight:normal;font-style:normal;letter-spacing:0.000px;">11</div>
<div class="t" style="left:257.60px;top:140.20px;font-size:12px;color:#444444;font-weight:normal;font-style:normal;letter-spacing:-0.559px;">Font</div>
<div class="t" style="left:587.00px;top:76.00px;font-size:12px;color:#333333;font-weight:normal;font-style:normal;letter-spacing:-0.308px;">Wrap Text</div>
<div class="t" style="left:587.00px;top:108.50px;font-size:12px;color:#333333;font-weight:normal;font-style:normal;letter-spacing:0.038px;">Merge &amp; Center</div>
<div class="t" style="left:512.00px;top:140.20px;font-size:12px;color:#444444;font-weight:normal;font-style:normal;letter-spacing:-0.128px;">Alignment</div>
<div class="t" style="left:714.30px;top:76.00px;font-size:12px;color:#262626;font-weight:normal;font-style:normal;letter-spacing:-0.421px;">General</div>
<div class="t" style="left:749.80px;top:140.20px;font-size:12px;color:#444444;font-weight:normal;font-style:normal;letter-spacing:-0.497px;">Number</div>
<div class="t" style="left:867.30px;top:100.80px;font-size:12px;color:#333333;font-weight:normal;font-style:normal;letter-spacing:0.173px;">Conditional</div>
<div class="t" style="left:863.80px;top:116.50px;font-size:12px;color:#333333;font-weight:normal;font-style:normal;letter-spacing:0.102px;">Formatting</div>
<div class="t" style="left:938.70px;top:100.80px;font-size:12px;color:#333333;font-weight:normal;font-style:normal;letter-spacing:-0.364px;">Format as</div>
<div class="t" style="left:946.20px;top:116.50px;font-size:12px;color:#333333;font-weight:normal;font-style:normal;letter-spacing:-0.928px;">Table</div>
<div class="t" style="left:1001.80px;top:74.40px;font-size:13px;color:#000000;font-weight:normal;font-style:normal;letter-spacing:0.639px;">Normal</div>
<div class="t" style="left:1107.60px;top:74.40px;font-size:13px;color:#9c0006;font-weight:normal;font-style:normal;letter-spacing:-0.000px;">Bad</div>
<div class="t" style="left:1214.30px;top:74.40px;font-size:13px;color:#006100;font-weight:normal;font-style:normal;letter-spacing:0.176px;">Good</div>
<div class="t" style="left:1002.00px;top:102.80px;font-size:13px;color:#fa7d00;font-weight:bold;font-style:normal;letter-spacing:-0.212px;">Calculation</div>
<div class="t" style="left:1108.60px;top:102.80px;font-size:13px;color:#ffffff;font-weight:bold;font-style:normal;letter-spacing:-0.385px;">Check Cell</div>
<div class="t" style="left:1214.30px;top:102.80px;font-size:13px;color:#7f7f7f;font-weight:normal;font-style:italic;letter-spacing:0.000px;">Explanatory...</div>
<div class="t" style="left:11.50px;top:173.00px;font-size:12.5px;color:#262626;font-weight:normal;font-style:normal;letter-spacing:0.873px;">N3</div>
<div class="t" style="left:53.40px;top:205.30px;font-size:12.5px;color:#222222;font-weight:normal;font-style:normal;letter-spacing:0.000px;">A</div>
<div class="t" style="left:117.40px;top:205.30px;font-size:12.5px;color:#222222;font-weight:normal;font-style:normal;letter-spacing:0.000px;">B</div>
<div class="t" style="left:181.40px;top:205.30px;font-size:12.5px;color:#222222;font-weight:normal;font-style:normal;letter-spacing:0.000px;">C</div>
<div class="t" style="left:244.90px;top:205.30px;font-size:12.5px;color:#222222;font-weight:normal;font-style:normal;letter-spacing:0.000px;">D</div>
<div class="t" style="left:309.40px;top:205.30px;font-size:12.5px;color:#222222;font-weight:normal;font-style:normal;letter-spacing:0.000px;">E</div>
<div class="t" style="left:373.40px;top:205.30px;font-size:12.5px;color:#222222;font-weight:normal;font-style:normal;letter-spacing:0.000px;">F</div>
<div class="t" style="left:437.40px;top:205.30px;font-size:12.5px;color:#222222;font-weight:normal;font-style:normal;letter-spacing:0.000px;">G</div>
<div class="t" style="left:500.90px;top:205.30px;font-size:12.5px;color:#222222;font-weight:normal;font-style:normal;letter-spacing:0.000px;">H</div>
<div class="t" style="left:567.90px;top:205.30px;font-size:12.5px;color:#222222;font-weight:normal;font-style:normal;letter-spacing:0.000px;">I</div>
<div class="t" style="left:630.90px;top:205.30px;font-size:12.5px;color:#222222;font-weight:normal;font-style:normal;letter-spacing:0.000px;">J</div>
<div class="t" style="left:692.90px;top:205.30px;font-size:12.5px;color:#222222;font-weight:normal;font-style:normal;letter-spacing:0.000px;">K</div>
<div class="t" style="left:757.90px;top:205.30px;font-size:12.5px;color:#222222;font-weight:normal;font-style:normal;letter-spacing:0.000px;">L</div>
<div class="t" style="left:820.40px;top:205.30px;font-size:12.5px;color:#222222;font-weight:normal;font-style:normal;letter-spacing:0.000px;">M</div>
<div class="t" style="left:9.60px;top:226.00px;font-size:12.5px;color:#222222;font-weight:normal;font-style:normal;letter-spacing:0.000px;">1</div>
<div class="t" style="left:9.60px;top:246.00px;font-size:12.5px;color:#222222;font-weight:normal;font-style:normal;letter-spacing:0.000px;">2</div>
<div class="t" style="left:9.60px;top:266.00px;font-size:12.5px;color:#1f6e43;font-weight:normal;font-style:normal;letter-spacing:0.000px;">3</div>
<div class="t" style="left:9.60px;top:286.00px;font-size:12.5px;color:#222222;font-weight:normal;font-style:normal;letter-spacing:0.000px;">4</div>
<div class="t" style="left:9.60px;top:306.00px;font-size:12.5px;color:#222222;font-weight:normal;font-style:normal;letter-spacing:0.000px;">5</div>
<div class="t" style="left:9.60px;top:326.00px;font-size:12.5px;color:#222222;font-weight:normal;font-style:normal;letter-spacing:0.000px;">6</div>
<div class="t" style="left:9.60px;top:346.00px;font-size:12.5px;color:#222222;font-weight:normal;font-style:normal;letter-spacing:0.000px;">7</div>
<div class="t" style="left:9.60px;top:366.00px;font-size:12.5px;color:#222222;font-weight:normal;font-style:normal;letter-spacing:0.000px;">8</div>
<div class="t" style="left:9.60px;top:386.00px;font-size:12.5px;color:#222222;font-weight:normal;font-style:normal;letter-spacing:0.000px;">9</div>
<div class="t" style="left:6.12px;top:406.00px;font-size:12.5px;color:#222222;font-weight:normal;font-style:normal;letter-spacing:0.000px;">10</div>
<div class="t" style="left:6.59px;top:426.00px;font-size:12.5px;color:#222222;font-weight:normal;font-style:normal;letter-spacing:0.000px;">11</div>
<div class="t" style="left:6.12px;top:446.00px;font-size:12.5px;color:#222222;font-weight:normal;font-style:normal;letter-spacing:0.000px;">12</div>
<div class="t" style="left:6.12px;top:466.00px;font-size:12.5px;color:#222222;font-weight:normal;font-style:normal;letter-spacing:0.000px;">13</div>
<div class="t" style="left:6.12px;top:486.00px;font-size:12.5px;color:#222222;font-weight:normal;font-style:normal;letter-spacing:0.000px;">14</div>
<div class="t" style="left:6.12px;top:506.00px;font-size:12.5px;color:#222222;font-weight:normal;font-style:normal;letter-spacing:0.000px;">15</div>

<div class="a" style="left:861px;top:138px;width:191px;height:335px;background:#fff;border:1px solid #c6c6c6;box-sizing:border-box;box-shadow:0 2px 6px rgba(0,0,0,0.18)"></div>
<div class="a" style="left:863px;top:140px;width:188px;height:48px;background:#c8c6c4"></div>
<div class="a" style="left:907px;top:237px;width:144px;height:1px;background:#e1dfdd"></div>
<div class="a" style="left:862px;top:384px;width:189px;height:1px;background:#e1dfdd"></div>
<div class="a" style="left:1051px;top:140px;width:191px;height:372px;background:#fff;border:1px solid #c6c6c6;box-sizing:border-box;box-shadow:0 2px 6px rgba(0,0,0,0.18)"></div>
<div class="a" style="left:1053px;top:479px;width:187px;height:1px;background:#e1dfdd"></div>

<svg width="1253" height="526" viewBox="0 0 1253 526">
<rect x="879.5" y="153.5" width="27" height="21" fill="#fafafa" stroke="#3c3c3c"/><line x1="879.5" y1="160.5" x2="906.5" y2="160.5" stroke="#6e6e6e"/><line x1="879.5" y1="167.5" x2="906.5" y2="167.5" stroke="#6e6e6e"/><line x1="886.5" y1="153.5" x2="886.5" y2="174.5" stroke="#6e6e6e"/><line x1="899.5" y1="153.5" x2="899.5" y2="174.5" stroke="#6e6e6e"/><rect x="879.5" y="153.5" width="27" height="21" fill="none" stroke="#3c3c3c"/><rect x="886.5" y="160.5" width="13" height="7" fill="#f8d88c" stroke="#e8730c"/><rect x="891.5" y="166.5" width="17" height="12.5" fill="#fafafa" stroke="#3c3c3c" stroke-width="1.1"/><path d="M903,169.5 L897.5,172 L903,174.7 M897.5,176.5 H903" fill="none" stroke="#444"/>
<rect x="879.5" y="201.5" width="27" height="21" fill="#fafafa" stroke="#3c3c3c"/><line x1="879.5" y1="208.5" x2="906.5" y2="208.5" stroke="#6e6e6e"/><line x1="879.5" y1="215.5" x2="906.5" y2="215.5" stroke="#6e6e6e"/><rect x="879.5" y="201.5" width="27" height="21" fill="none" stroke="#3c3c3c"/>
<rect x="886.5" y="201.5" width="13" height="21" fill="#f8d88c" stroke="none"/>
<path d="M886.5,201 V222.5 M899.5,201 V214" fill="none" stroke="#e8730c"/><line x1="886.5" y1="201.5" x2="899.5" y2="201.5" stroke="#e8730c"/>
<line x1="879.5" y1="208.5" x2="886.5" y2="208.5" stroke="#6e6e6e"/><line x1="879.5" y1="215.5" x2="886.5" y2="215.5" stroke="#6e6e6e"/><line x1="899.5" y1="208.5" x2="906.5" y2="208.5" stroke="#6e6e6e"/>
<path d="M892.5,212.5 V203 M888.3,207.2 L892.5,203 L896.7,207.2" fill="none" stroke="#3c3c3c" stroke-width="1.1"/>
<rect x="891.5" y="214.5" width="17" height="12.5" fill="#fafafa" stroke="#3c3c3c" stroke-width="1.1"/>
<text x="894.3" y="225" font-family="Liberation Sans" font-size="10.5" fill="#505050" letter-spacing="-0.6">10</text>
<rect x="879.5" y="252.5" width="27" height="21" fill="#fafafa" stroke="#3c3c3c"/><line x1="879.5" y1="259.5" x2="906.5" y2="259.5" stroke="#6e6e6e"/><line x1="879.5" y1="266.5" x2="906.5" y2="266.5" stroke="#6e6e6e"/><line x1="885" y1="252.5" x2="885" y2="273.5" stroke="#6e6e6e"/><line x1="901.5" y1="252.5" x2="901.5" y2="273.5" stroke="#6e6e6e"/><rect x="879.5" y="252.5" width="27" height="21" fill="none" stroke="#3c3c3c"/>
<path d="M885.5,252.5 H893.5 V259.5 H888.5 V266.5 H891.5 V273.5 H885.5 Z" fill="#86bdee" stroke="#1470c8" stroke-width="1.1"/>
<rect x="879.5" y="300.5" width="27" height="21" fill="#fafafa" stroke="#3c3c3c"/><line x1="879.5" y1="307.5" x2="906.5" y2="307.5" stroke="#6e6e6e"/><line x1="879.5" y1="314.5" x2="906.5" y2="314.5" stroke="#6e6e6e"/><rect x="879.5" y="300.5" width="27" height="21" fill="none" stroke="#3c3c3c"/>
<line x1="879.5" y1="307.5" x2="886" y2="307.5" stroke="#6e6e6e"/><line x1="879.5" y1="314.5" x2="886" y2="314.5" stroke="#6e6e6e"/><line x1="902" y1="307.5" x2="906.5" y2="307.5" stroke="#6e6e6e"/><line x1="902" y1="314.5" x2="906.5" y2="314.5" stroke="#6e6e6e"/>
<rect x="885.5" y="307.5" width="16.5" height="7" fill="#f8d88c" stroke="#e8730c"/>
<rect x="885.5" y="314.5" width="16.5" height="7" fill="#ff8f96" stroke="#e02020"/>
<rect x="885.5" y="300.5" width="16.5" height="7" fill="#86bdee" stroke="#1470c8"/>
<rect x="879.5" y="348.5" width="27" height="21" fill="#fafafa" stroke="#3c3c3c"/><line x1="879.5" y1="355.5" x2="906.5" y2="355.5" stroke="#6e6e6e"/><line x1="879.5" y1="362.5" x2="906.5" y2="362.5" stroke="#6e6e6e"/><line x1="885" y1="348.5" x2="885" y2="369.5" stroke="#6e6e6e"/><line x1="901.5" y1="348.5" x2="901.5" y2="369.5" stroke="#6e6e6e"/><rect x="879.5" y="348.5" width="27" height="21" fill="none" stroke="#3c3c3c"/>
<circle cx="887.5" cy="351.5" r="1.6" fill="#1a7fd4"/><circle cx="887.5" cy="358.5" r="1.6" fill="#e8323a"/><circle cx="887.5" cy="365.5" r="1.6" fill="#1a7fd4"/>
<path d="M895,351.5 H900 M895,358.5 H900 M895,365.5 H900" stroke="#555"/>
<polyline points="1038.0,159 1043.0,163.5 1038.0,168" fill="none" stroke="#444" stroke-width="1.1"/>
<polyline points="1038.0,207 1043.0,211.5 1038.0,216" fill="none" stroke="#444" stroke-width="1.1"/>
<polyline points="1038.0,258.5 1043.0,263.0 1038.0,267.5" fill="none" stroke="#444" stroke-width="1.1"/>
<polyline points="1038.0,306.5 1043.0,311.0 1038.0,315.5" fill="none" stroke="#444" stroke-width="1.1"/>
<polyline points="1038.0,354.5 1043.0,359.0 1038.0,363.5" fill="none" stroke="#444" stroke-width="1.1"/>
<polyline points="1038.0,423 1043.0,427.5 1038.0,432" fill="none" stroke="#444" stroke-width="1.1"/>
<rect x="875.5" y="393.5" width="15" height="13" fill="#fafafa" stroke="#3c3c3c"/><line x1="875.5" y1="397.5" x2="890.5" y2="397.5" stroke="#6e6e6e"/><line x1="875.5" y1="402.5" x2="890.5" y2="402.5" stroke="#6e6e6e"/><line x1="879.5" y1="393.5" x2="879.5" y2="406.5" stroke="#6e6e6e"/><line x1="886.5" y1="393.5" x2="886.5" y2="406.5" stroke="#6e6e6e"/><rect x="875.5" y="393.5" width="15" height="13" fill="none" stroke="#3c3c3c"/><rect x="879.5" y="397.5" width="7" height="5" fill="#f8d88c" stroke="#e8730c" stroke-width="1.3"/>
<rect x="875.5" y="421.5" width="15" height="13" fill="#fafafa" stroke="#3c3c3c"/><line x1="875.5" y1="425.5" x2="890.5" y2="425.5" stroke="#6e6e6e"/><line x1="875.5" y1="430.5" x2="890.5" y2="430.5" stroke="#6e6e6e"/><line x1="879.5" y1="421.5" x2="879.5" y2="434.5" stroke="#6e6e6e"/><line x1="886.5" y1="421.5" x2="886.5" y2="434.5" stroke="#6e6e6e"/><rect x="875.5" y="421.5" width="15" height="13" fill="none" stroke="#3c3c3c"/><path d="M880,431 V425.5 H886.5 V427 L882,431 Z" fill="#f8d88c"/><path d="M879.8,431 V425.6 H886" fill="none" stroke="#e8730c" stroke-width="1.3"/><path d="M881.5,432.3 L887.6,426.2 L891,429.6 L884.9,435.7 Z" fill="#fff" stroke="#fff" stroke-width="2.5"/><path d="M881.8,432.3 L887.6,426.5 L890.7,429.6 L884.9,435.4 Z M883.6,430.5 L886.7,433.6" fill="#f7f0fa" stroke="#9b3fbf" stroke-width="1.15"/>
<path d="M875.5,461 V448.5 H889" fill="none" stroke="#3c3c3c" stroke-width="1.1"/><rect x="877.5" y="450.5" width="13" height="12" fill="#fafafa" stroke="#3c3c3c"/><line x1="877.5" y1="454.5" x2="890.5" y2="454.5" stroke="#6e6e6e"/><line x1="877.5" y1="458.5" x2="890.5" y2="458.5" stroke="#6e6e6e"/><line x1="881.5" y1="450.5" x2="881.5" y2="462.5" stroke="#6e6e6e"/><line x1="886.5" y1="450.5" x2="886.5" y2="462.5" stroke="#6e6e6e"/><rect x="877.5" y="450.5" width="13" height="12" fill="none" stroke="#3c3c3c"/><rect x="881.5" y="454.5" width="5" height="4" fill="#f8d88c" stroke="#e8730c" stroke-width="1.3"/>
<rect x="1069.5" y="155.5" width="27" height="21" fill="#fafafa" stroke="#3c3c3c"/><line x1="1069.5" y1="162.5" x2="1096.5" y2="162.5" stroke="#6e6e6e"/><line x1="1069.5" y1="169.5" x2="1096.5" y2="169.5" stroke="#6e6e6e"/><line x1="1076.5" y1="155.5" x2="1076.5" y2="176.5" stroke="#6e6e6e"/><line x1="1089.5" y1="155.5" x2="1089.5" y2="176.5" stroke="#6e6e6e"/><rect x="1069.5" y="155.5" width="27" height="21" fill="none" stroke="#3c3c3c"/><rect x="1076.5" y="162.5" width="13" height="7" fill="#f8d88c" stroke="#e8730c"/><rect x="1081.5" y="168.5" width="17" height="12.5" fill="#fafafa" stroke="#3c3c3c" stroke-width="1.1"/><path d="M1087.5,171.2 L1093.5,174.8 L1087.5,178.4" fill="none" stroke="#444"/>
<rect x="1069.5" y="203.5" width="27" height="21" fill="#fafafa" stroke="#3c3c3c"/><line x1="1069.5" y1="210.5" x2="1096.5" y2="210.5" stroke="#6e6e6e"/><line x1="1069.5" y1="217.5" x2="1096.5" y2="217.5" stroke="#6e6e6e"/><line x1="1076.5" y1="203.5" x2="1076.5" y2="224.5" stroke="#6e6e6e"/><line x1="1089.5" y1="203.5" x2="1089.5" y2="224.5" stroke="#6e6e6e"/><rect x="1069.5" y="203.5" width="27" height="21" fill="none" stroke="#3c3c3c"/><rect x="1076.5" y="210.5" width="13" height="7" fill="#f8d88c" stroke="#e8730c"/><rect x="1081.5" y="216.5" width="17" height="12.5" fill="#fafafa" stroke="#3c3c3c" stroke-width="1.1"/><path d="M1093.5,219.2 L1087.5,222.8 L1093.5,226.4" fill="none" stroke="#444"/>
<rect x="1069.5" y="251.5" width="27" height="21" fill="#fafafa" stroke="#3c3c3c"/><line x1="1069.5" y1="258.5" x2="1096.5" y2="258.5" stroke="#6e6e6e"/><line x1="1069.5" y1="265.5" x2="1096.5" y2="265.5" stroke="#6e6e6e"/><line x1="1076.5" y1="251.5" x2="1076.5" y2="272.5" stroke="#6e6e6e"/><line x1="1089.5" y1="251.5" x2="1089.5" y2="272.5" stroke="#6e6e6e"/><rect x="1069.5" y="251.5" width="27" height="21" fill="none" stroke="#3c3c3c"/><rect x="1069.5" y="251.5" width="7" height="7" fill="#86bdee" stroke="#1470c8"/><rect x="1089.5" y="251.5" width="7" height="7" fill="#86bdee" stroke="#1470c8"/><rect x="1076.5" y="258.5" width="13" height="7" fill="#f8d88c" stroke="#e8730c"/>
<rect x="1069.5" y="299.5" width="27" height="21" fill="#fafafa" stroke="#3c3c3c"/><line x1="1069.5" y1="306.5" x2="1096.5" y2="306.5" stroke="#6e6e6e"/><line x1="1069.5" y1="313.5" x2="1096.5" y2="313.5" stroke="#6e6e6e"/><line x1="1076.5" y1="299.5" x2="1076.5" y2="320.5" stroke="#6e6e6e"/><line x1="1089.5" y1="299.5" x2="1089.5" y2="320.5" stroke="#6e6e6e"/><rect x="1069.5" y="299.5" width="27" height="21" fill="none" stroke="#3c3c3c"/><rect x="1076.5" y="306.5" width="13" height="7" fill="#f8d88c" stroke="#e8730c"/><rect x="1081.5" y="312.5" width="17" height="12.5" fill="#fafafa" stroke="#3c3c3c" stroke-width="1.1"/><path d="M1086.5,318.5 H1094.5 M1086.5,321.5 H1094.5" fill="none" stroke="#444"/>
<rect x="1069.5" y="347.5" width="27" height="21" fill="#fafafa" stroke="#3c3c3c"/><line x1="1069.5" y1="354.5" x2="1096.5" y2="354.5" stroke="#6e6e6e"/><line x1="1069.5" y1="361.5" x2="1096.5" y2="361.5" stroke="#6e6e6e"/><line x1="1076.5" y1="347.5" x2="1076.5" y2="368.5" stroke="#6e6e6e"/><line x1="1089.5" y1="347.5" x2="1089.5" y2="368.5" stroke="#6e6e6e"/><rect x="1069.5" y="347.5" width="27" height="21" fill="none" stroke="#3c3c3c"/><rect x="1076.5" y="354.5" width="13" height="7" fill="#f8d88c" stroke="#e8730c"/><rect x="1081.5" y="360.5" width="17" height="12.5" fill="#fafafa" stroke="#3c3c3c" stroke-width="1.1"/><text x="1086.3" y="371" font-family="Liberation Sans" font-size="11.5" fill="#505050">a</text>
<rect x="1069.5" y="395.5" width="27" height="21" fill="#fafafa" stroke="#3c3c3c"/><line x1="1069.5" y1="402.5" x2="1096.5" y2="402.5" stroke="#6e6e6e"/><line x1="1069.5" y1="409.5" x2="1096.5" y2="409.5" stroke="#6e6e6e"/><line x1="1076.5" y1="395.5" x2="1076.5" y2="416.5" stroke="#6e6e6e"/><line x1="1089.5" y1="395.5" x2="1089.5" y2="416.5" stroke="#6e6e6e"/><rect x="1069.5" y="395.5" width="27" height="21" fill="none" stroke="#3c3c3c"/><rect x="1076.5" y="402.5" width="13" height="7" fill="#f8d88c" stroke="#e8730c"/><rect x="1084" y="407" width="15.5" height="15.5" fill="#fff"/><rect x="1084.5" y="408.5" width="14" height="13" fill="#fafafa" stroke="#3c3c3c" stroke-width="1.1"/><line x1="1084.5" y1="411.5" x2="1098.5" y2="411.5" stroke="#3c3c3c"/><line x1="1087.5" y1="406.5" x2="1087.5" y2="410" stroke="#3c3c3c" stroke-width="1.1"/><line x1="1095.5" y1="406.5" x2="1095.5" y2="410" stroke="#3c3c3c" stroke-width="1.1"/>
<rect x="1069.5" y="443.5" width="27" height="21" fill="#fafafa" stroke="#3c3c3c"/><line x1="1069.5" y1="450.5" x2="1096.5" y2="450.5" stroke="#6e6e6e"/><line x1="1069.5" y1="457.5" x2="1096.5" y2="457.5" stroke="#6e6e6e"/><line x1="1076.5" y1="443.5" x2="1076.5" y2="464.5" stroke="#6e6e6e"/><line x1="1089.5" y1="443.5" x2="1089.5" y2="464.5" stroke="#6e6e6e"/><rect x="1069.5" y="443.5" width="27" height="21" fill="none" stroke="#3c3c3c"/><rect x="1076.5" y="443.5" width="13" height="7" fill="#f8d88c" stroke="#e8730c"/><rect x="1076.5" y="457.5" width="13" height="7" fill="#f8d88c" stroke="#e8730c"/>
</svg>
<div class="t" style="left:916.50px;top:157.00px;font-size:12px;color:#262626;font-weight:bold;font-style:normal;letter-spacing:-0.417px;"><u>H</u>ighlight Cells Rules</div>
<div class="t" style="left:916.50px;top:205.00px;font-size:12px;color:#262626;font-weight:bold;font-style:normal;letter-spacing:-0.084px;"><u>T</u>op/Bottom Rules</div>
<div class="t" style="left:916.50px;top:256.00px;font-size:12px;color:#262626;font-weight:bold;font-style:normal;letter-spacing:-0.419px;"><u>D</u>ata Bars</div>
<div class="t" style="left:916.50px;top:304.00px;font-size:12px;color:#262626;font-weight:bold;font-style:normal;letter-spacing:-0.638px;">Color <u>S</u>cales</div>
<div class="t" style="left:916.50px;top:351.50px;font-size:12px;color:#262626;font-weight:bold;font-style:normal;letter-spacing:-0.372px;"><u>I</u>con Sets</div>
<div class="t" style="left:900.30px;top:390.70px;font-size:12px;color:#262626;font-weight:normal;font-style:normal;letter-spacing:-0.309px;"><u>N</u>ew Rule...</div>
<div class="t" style="left:900.30px;top:418.70px;font-size:12px;color:#262626;font-weight:normal;font-style:normal;letter-spacing:-0.479px;"><u>C</u>lear Rules</div>
<div class="t" style="left:900.30px;top:446.80px;font-size:12px;color:#262626;font-weight:normal;font-style:normal;letter-spacing:-0.339px;">Manage <u>R</u>ules...</div>
<div class="t" style="left:1106.50px;top:159.20px;font-size:12px;color:#262626;font-weight:bold;font-style:normal;letter-spacing:-0.168px;"><u>G</u>reater Than...</div>
<div class="t" style="left:1106.50px;top:207.00px;font-size:12px;color:#262626;font-weight:bold;font-style:normal;letter-spacing:-0.702px;"><u>L</u>ess Than...</div>
<div class="t" style="left:1106.50px;top:255.00px;font-size:12px;color:#262626;font-weight:bold;font-style:normal;letter-spacing:0.087px;"><u>B</u>etween...</div>
<div class="t" style="left:1106.50px;top:303.00px;font-size:12px;color:#262626;font-weight:bold;font-style:normal;letter-spacing:-0.484px;"><u>E</u>qual To...</div>
<div class="t" style="left:1106.50px;top:351.00px;font-size:12px;color:#262626;font-weight:bold;font-style:normal;letter-spacing:-0.142px;"><u>T</u>ext that Contains...</div>
<div class="t" style="left:1106.50px;top:398.80px;font-size:12px;color:#262626;font-weight:bold;font-style:normal;letter-spacing:-0.225px;"><u>A</u> Date Occurring...</div>
<div class="t" style="left:1106.50px;top:446.50px;font-size:12px;color:#262626;font-weight:bold;font-style:normal;letter-spacing:-0.225px;"><u>D</u>uplicate Values...</div>
<div class="t" style="left:1090.30px;top:486.00px;font-size:12px;color:#262626;font-weight:normal;font-style:normal;letter-spacing:-0.318px;"><u>M</u>ore Rules...</div>
<svg width="1253" height="526" viewBox="0 0 1253 526">
<ellipse cx="896.4" cy="94.05" rx="53.3" ry="56.0" transform="rotate(16.3 896.4 94.05)" fill="none" stroke="#ec1c24" stroke-width="5.2"/>
</svg>
</body></html>
